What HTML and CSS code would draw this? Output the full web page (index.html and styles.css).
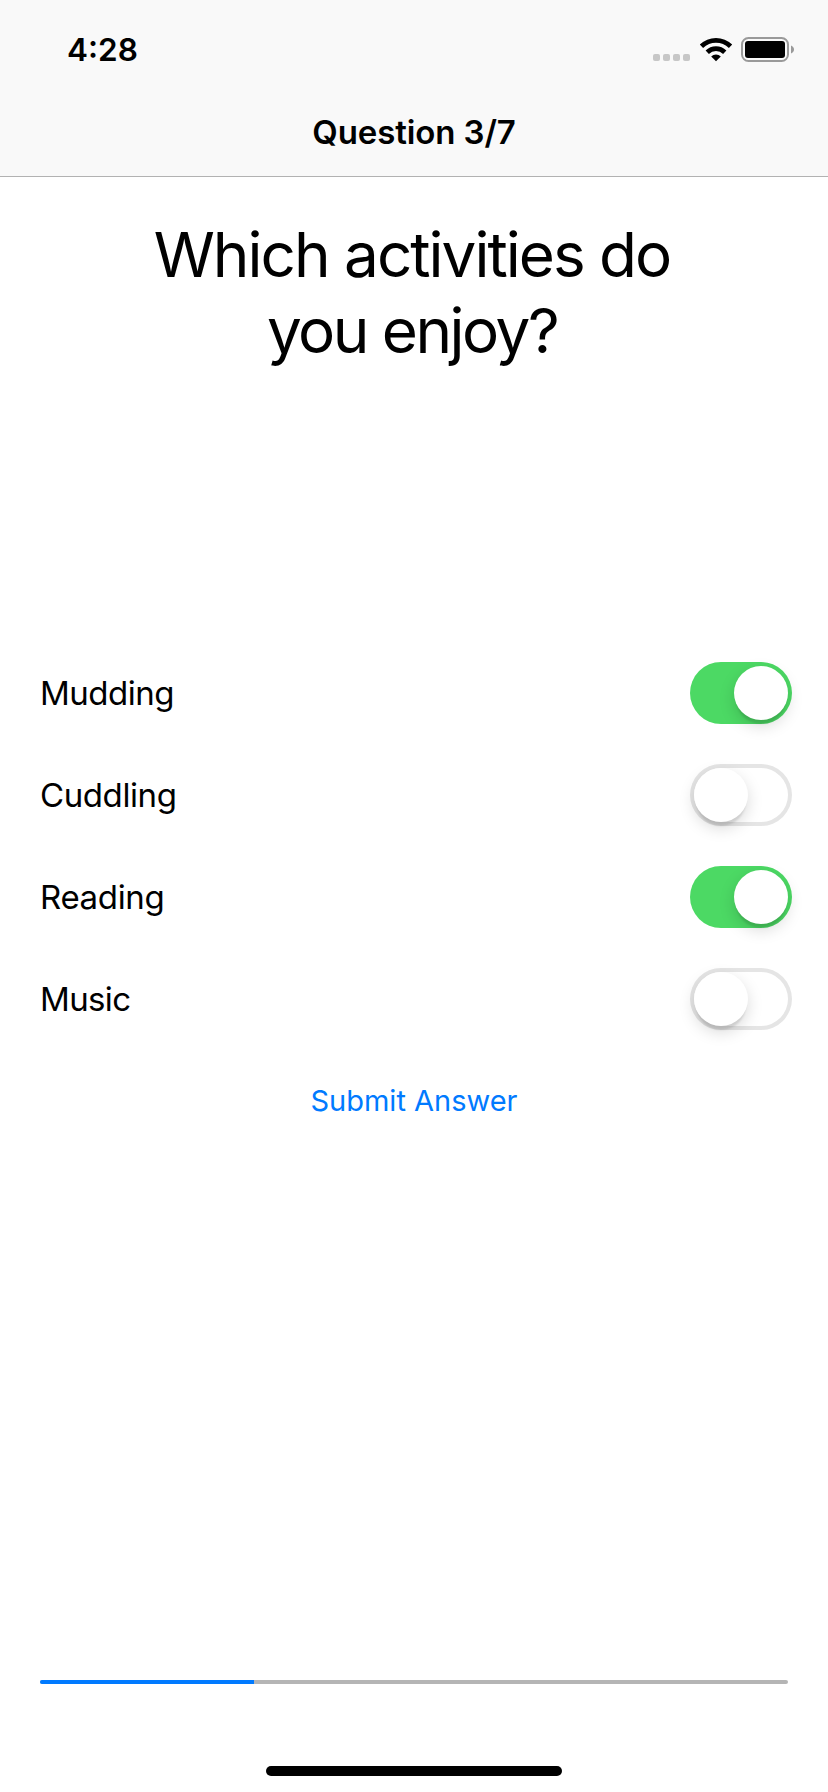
FILE: index.html
```html
<!DOCTYPE html>
<html lang="en">
<head>
<meta charset="utf-8">
<title>Question 3/7</title>
<link rel="stylesheet" href="styles.css">
</head>
<body>
<div class="screen">
  <header class="navbar">
    <div class="status">
      <span class="time">4:28</span>
      <div class="indicators">
        <div class="signal"><i></i><i></i><i></i><i></i></div>
        <svg class="wifi" width="34" height="25" viewBox="0 0 34 25">
          <path d="M.8 7.6a23 23 0 0 1 32.4 0l-3.3 3.4a18.4 18.4 0 0 0-25.8 0z"/>
          <path d="M6.6 13.6a14.8 14.8 0 0 1 20.8 0l-3.3 3.4a10 10 0 0 0-14.2 0z"/>
          <path d="M12.2 19.4a6.8 6.8 0 0 1 9.6 0L17 24.3z"/>
        </svg>
        <svg class="battery" width="54" height="25" viewBox="0 0 54 25">
          <rect x="1" y="1" width="46" height="23" rx="6.5" fill="none" stroke="#9a9a9a" stroke-width="2"/>
          <rect x="4" y="4" width="40" height="17" rx="3"/>
          <path d="M50 8.5c4 1.5 4 6.5 0 8z" fill="#9a9a9a"/>
        </svg>
      </div>
    </div>
    <h1 class="title">Question 3/7</h1>
  </header>
  <main class="content">
    <h2 class="question"><span class="line-one">Which activities do</span><br><span class="line-two">you enjoy?</span></h2>
    <div class="options">
      <div class="option"><span class="label mudding">Mudding</span><span class="switch on"><span class="knob"></span></span></div>
      <div class="option"><span class="label cuddling">Cuddling</span><span class="switch"><span class="knob"></span></span></div>
      <div class="option"><span class="label reading">Reading</span><span class="switch on"><span class="knob"></span></span></div>
      <div class="option"><span class="label music">Music</span><span class="switch"><span class="knob"></span></span></div>
    </div>
    <button class="submit" type="button">Submit Answer</button>
    <div class="progress"><div class="fill"></div></div>
    <div class="home"></div>
  </main>
</div>
</body>
</html>
```
FILE: styles.css
```css
* { box-sizing: border-box; }
body { margin: 0; background: #fff; color: #000; font-family: Inter, "Liberation Sans", sans-serif; }
.screen { display: flex; flex-direction: column; width: 828px; height: 1792px; overflow: hidden; }
.navbar { height: 177px; background: #f9f9f9; border-bottom: 1px solid #b2b2b2; }
.status { display: flex; justify-content: space-between; height: 88px; padding: 37px 33px 0 67px; }
.time { font-size: 31.5px; font-weight: 600; line-height: 26px; }
.indicators { display: flex; height: 25px; }
.signal { display: flex; gap: 3px; padding-top: 17px; margin-right: 9px; }
.signal i { width: 7px; height: 7px; border-radius: 2px; background: #c7c7c7; }
.wifi { margin-right: 8px; }
.title { margin: 0; font-size: 33px; font-weight: 600; line-height: 88px; text-align: center; letter-spacing: -0.12px; }
.content { display: flex; flex: 1; flex-direction: column; align-items: center; }
.question { margin: 40px 0 0; padding-right: 4px; font-size: 62px; font-weight: 400; line-height: 76px; text-align: center; }
.line-one { letter-spacing: -2px; }
.line-two { letter-spacing: -2.5px; }
.options { display: flex; flex-direction: column; gap: 40px; width: 100%; margin-top: 293px; padding: 0 36px 0 40px; }
.option { display: flex; align-items: center; justify-content: space-between; height: 62px; }
.label { font-size: 33px; letter-spacing: -0.5px; }
.cuddling { letter-spacing: -0.4px; }
.reading { letter-spacing: -0.35px; }
.music { letter-spacing: -0.65px; }
.switch { width: 102px; height: 62px; padding: 4px; border-radius: 31px; box-shadow: inset 0 0 0 4px #e5e5e5; }
.switch.on { padding-left: 44px; background: #4cd964; box-shadow: none; }
.knob { display: block; width: 54px; height: 54px; border-radius: 50%; background: #fff; box-shadow: 0 6px 16px rgba(0,0,0,.15), 0 6px 2px -2px rgba(0,0,0,.1); }
.submit { margin: 35px 0 0; padding: 0; border: 0; background: none; color: #007aff; font: 400 29px/72px Inter, "Liberation Sans", sans-serif; }
.progress { width: 748px; height: 4px; margin-top: 543px; border-radius: 2px; background: #b5b5b5; overflow: hidden; }
.fill { width: 214px; height: 4px; background: #007aff; }
.home { width: 296px; height: 10px; margin-top: 82px; border-radius: 5px; background: #000; }
```
